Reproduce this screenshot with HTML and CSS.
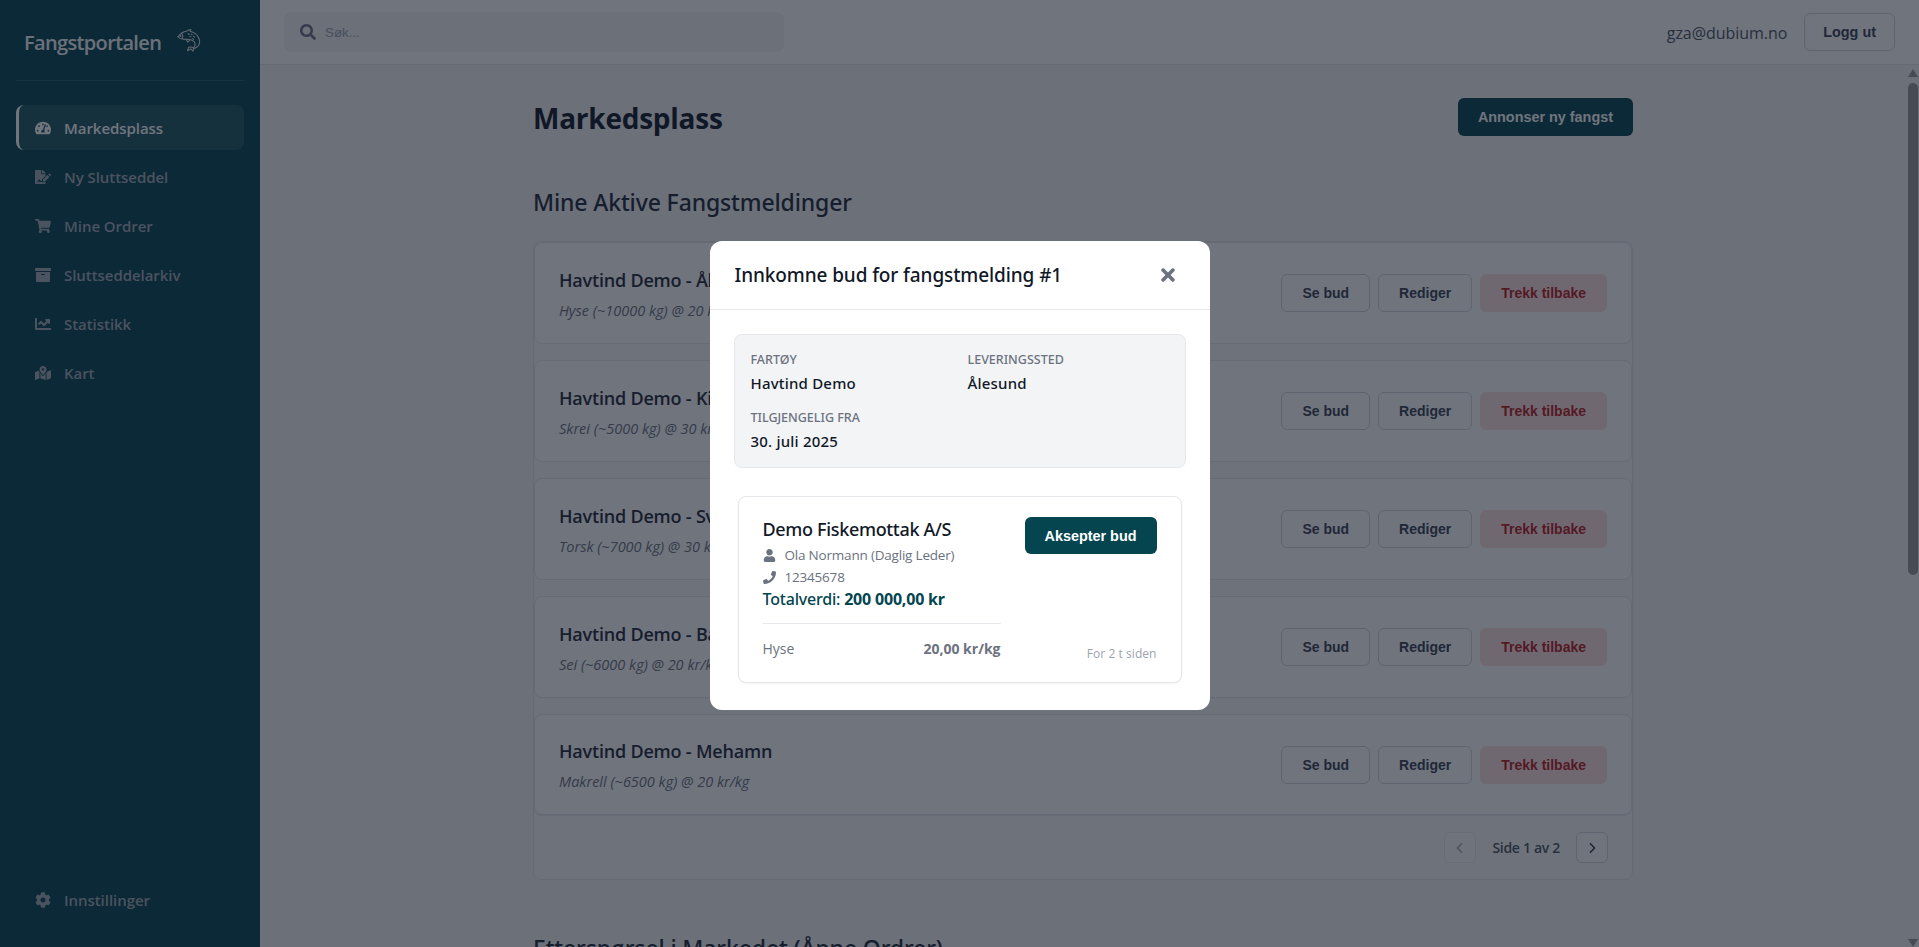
FILE: index.html
```html
<!DOCTYPE html>
<html lang="no">
<head>
    <meta charset="UTF-8">
    <meta name="viewport" content="width=device-width, initial-scale=1.0">
    <title>Fangstportalen</title>
    <link rel="stylesheet" href="styles.css">
</head>
<body>
    <svg class="sprite" aria-hidden="true">
        <symbol id="i-gauge" viewBox="0 0 576 512"><path d="M288 32C128.94 32 0 160.94 0 320c0 52.8 14.25 102.26 39.06 144.8 5.61 9.62 16.3 15.2 27.44 15.2h443c11.14 0 21.83-5.58 27.44-15.2C561.75 422.26 576 372.8 576 320c0-159.06-128.94-288-288-288zm0 64c14.71 0 26.58 10.13 30.32 23.65-1.11 2.26-2.64 4.23-3.45 6.67l-9.22 27.67c-5.13 3.49-10.97 6.01-17.64 6.01-17.67 0-32-14.33-32-32S270.33 96 288 96zM96 384c-17.67 0-32-14.33-32-32s14.33-32 32-32 32 14.33 32 32-14.33 32-32 32zm48-160c-17.67 0-32-14.33-32-32s14.33-32 32-32 32 14.33 32 32-14.33 32-32 32zm246.77-72.41l-61.33 184C343.13 347.33 352 364.54 352 384c0 11.72-3.38 22.55-8.88 32H232.88c-5.5-9.45-8.88-20.28-8.88-32 0-33.94 26.5-61.43 59.9-63.59l61.34-184.01c4.17-12.56 17.73-19.45 30.36-15.17 12.57 4.19 19.35 17.79 15.17 30.36zm14.66 57.2l15.52-46.55c3.47-1.29 7.13-2.23 11.05-2.23 17.67 0 32 14.33 32 32s-14.33 32-32 32c-11.38-.01-20.89-6.28-26.57-15.22zM480 384c-17.67 0-32-14.33-32-32s14.33-32 32-32 32 14.33 32 32-14.33 32-32 32z"/></symbol>
        <symbol id="i-sign" viewBox="0 0 576 512"><path d="M218.17 424.14c-2.95-5.92-8.09-6.52-10.17-6.52s-7.22.59-10.02 6.19l-7.67 15.34c-6.37 12.78-25.03 11.37-29.48-2.09L144 386.59l-10.61 31.88c-5.89 17.66-22.38 29.53-41 29.53H80c-8.84 0-16-7.16-16-16s7.16-16 16-16h12.39c4.83 0 9.11-3.08 10.64-7.66l18.19-54.64c3.3-9.81 12.44-16.41 22.78-16.41s19.48 6.59 22.77 16.41l13.88 41.64c19.75-16.19 54.06-9.7 66 14.16 1.89 3.78 5.49 5.95 9.36 6.26v-82.12l128-127.09V160H248c-13.2 0-24-10.8-24-24V0H24C10.7 0 0 10.7 0 24v464c0 13.3 10.7 24 24 24h336c13.3 0 24-10.7 24-24v-40l-128-.11c-16.12-.31-30.58-9.28-37.83-23.75zM384 121.9c0-6.3-2.5-12.4-7-16.9L279.1 7c-4.5-4.5-10.6-7-17-7H256v128h128v-6.1zm-96 225.06V416h68.99l161.68-162.78-67.88-67.88L288 346.96zm280.54-179.63l-31.87-31.87c-9.94-9.94-26.07-9.94-36.01 0l-27.25 27.25 67.88 67.88 27.25-27.25c9.95-9.94 9.95-26.07 0-36.01z"/></symbol>
        <symbol id="i-cart" viewBox="0 0 576 512"><path d="M528.12 301.319l47.273-208C578.806 78.301 567.391 64 551.99 64H159.208l-9.166-44.81C147.758 8.021 137.93 0 126.529 0H24C10.745 0 0 10.745 0 24v16c0 13.255 10.745 24 24 24h69.883l70.248 343.435C147.325 417.1 136 435.222 136 456c0 30.928 25.072 56 56 56s56-25.072 56-56c0-15.674-6.447-29.835-16.824-40h209.647C430.447 426.165 424 440.326 424 456c0 30.928 25.072 56 56 56s56-25.072 56-56c0-22.172-12.888-41.332-31.579-50.405l5.517-24.276c3.413-15.018-8.002-29.319-23.403-29.319H218.117l-6.545-32h293.145c11.206 0 20.92-7.754 23.403-18.681z"/></symbol>
        <symbol id="i-archive" viewBox="0 0 512 512"><path d="M32 448c0 17.7 14.3 32 32 32h384c17.7 0 32-14.3 32-32V160H32v288zm160-212c0-6.6 5.4-12 12-12h104c6.6 0 12 5.4 12 12v8c0 6.6-5.4 12-12 12H204c-6.6 0-12-5.4-12-12v-8zM480 32H32C14.3 32 0 46.3 0 64v48c0 8.8 7.2 16 16 16h480c8.8 0 16-7.2 16-16V64c0-17.7-14.3-32-32-32z"/></symbol>
        <symbol id="i-chart" viewBox="0 0 512 512"><path d="M496 384H64V80c0-8.84-7.16-16-16-16H16C7.16 64 0 71.16 0 80v336c0 17.67 14.33 32 32 32h464c8.84 0 16-7.16 16-16v-32c0-8.84-7.16-16-16-16zM464 96H345.94c-21.38 0-32.09 25.85-16.97 40.97l32.4 32.4L288 242.75l-73.37-73.37c-12.5-12.5-32.76-12.5-45.25 0l-68.69 68.69c-6.25 6.25-6.25 16.38 0 22.63l22.62 22.62c6.25 6.25 16.38 6.25 22.63 0L192 237.25l73.37 73.37c12.5 12.5 32.76 12.5 45.25 0l96-96 32.4 32.4c15.12 15.12 40.97 4.41 40.97-16.97V112c.01-8.84-7.15-16-15.99-16z"/></symbol>
        <symbol id="i-map" viewBox="0 0 576 512"><path d="M288 0c-69.59 0-126 56.41-126 126 0 56.26 82.35 158.8 113.9 196.02 6.39 7.54 17.82 7.54 24.2 0C331.65 284.8 414 182.26 414 126 414 56.41 357.59 0 288 0zm0 168c-23.2 0-42-18.8-42-42s18.8-42 42-42 42 18.8 42 42-18.8 42-42 42zM20.12 215.95A32.006 32.006 0 0 0 0 245.66v250.32c0 11.32 11.43 19.06 21.94 14.86L160 448V214.92c-8.84-15.98-16.07-31.54-21.25-46.42L20.12 215.95zM288 359.67c-14.07 0-27.38-6.18-36.51-16.96-19.66-23.2-40.57-49.62-59.49-76.72v182l192 64V266c-18.92 27.09-39.82 53.52-59.49 76.72-9.13 10.77-22.44 16.95-36.51 16.95zm266.06-198.51L416 224v288l139.88-55.95A31.996 31.996 0 0 0 576 426.34V176.02c0-11.32-11.43-19.06-21.94-14.86z"/></symbol>
        <symbol id="i-cog" viewBox="0 0 512 512"><path d="M487.4 315.7l-42.6-24.6c4.3-23.2 4.3-47 0-70.2l42.6-24.6c4.9-2.8 7.1-8.6 5.5-14-11.1-35.6-30-67.8-54.7-94.6-3.8-4.1-10-5.1-14.8-2.3L380.8 110c-17.9-15.4-38.5-27.3-60.8-35.1V25.8c0-5.6-3.9-10.5-9.4-11.7-36.7-8.2-74.3-7.8-109.2 0-5.5 1.2-9.4 6.1-9.4 11.7V75c-22.2 7.9-42.8 19.8-60.8 35.1L88.7 85.5c-4.9-2.8-11-1.9-14.8 2.3-24.7 26.7-43.6 58.9-54.7 94.6-1.7 5.4.6 11.2 5.5 14L67.3 221c-4.3 23.2-4.3 47 0 70.2l-42.6 24.6c-4.9 2.8-7.1 8.6-5.5 14 11.1 35.6 30 67.8 54.7 94.6 3.8 4.1 10 5.1 14.8 2.3l42.6-24.6c17.9 15.4 38.5 27.3 60.8 35.1v49.2c0 5.6 3.9 10.5 9.4 11.7 36.7 8.2 74.3 7.8 109.2 0 5.5-1.2 9.4-6.1 9.4-11.7v-49.2c22.2-7.9 42.8-19.8 60.8-35.1l42.6 24.6c4.9 2.8 11 1.9 14.8-2.3 24.7-26.7 43.6-58.9 54.7-94.6 1.5-5.5-.7-11.3-5.6-14.1zM256 336c-44.1 0-80-35.9-80-80s35.9-80 80-80 80 35.9 80 80-35.9 80-80 80z"/></symbol>
        <symbol id="i-search" viewBox="0 0 512 512"><path d="M505 442.7L405.3 343c-4.5-4.5-10.6-7-17-7H372c27.6-35.3 44-79.7 44-128C416 93.1 322.9 0 208 0S0 93.1 0 208s93.1 208 208 208c48.3 0 92.7-16.4 128-44v16.3c0 6.4 2.5 12.5 7 17l99.7 99.7c9.4 9.4 24.6 9.4 33.9 0l28.3-28.3c9.4-9.4 9.4-24.6.1-34zM208 336c-70.7 0-128-57.2-128-128 0-70.7 57.2-128 128-128 70.7 0 128 57.2 128 128 0 70.7-57.2 128-128 128z"/></symbol>
        <symbol id="i-user" viewBox="0 0 448 512"><path d="M224 256c70.7 0 128-57.3 128-128S294.7 0 224 0 96 57.3 96 128s57.3 128 128 128zm89.6 32h-16.7c-22.2 10.2-46.9 16-72.9 16s-50.6-5.8-72.9-16h-16.7C60.2 288 0 348.2 0 422.4V464c0 26.5 21.5 48 48 48h352c26.5 0 48-21.5 48-48v-41.6c0-74.2-60.2-134.4-134.4-134.4z"/></symbol>
        <symbol id="i-phone" viewBox="0 0 512 512"><path d="M493.4 24.6l-104-24c-11.3-2.6-22.9 3.3-27.5 13.9l-48 112c-4.2 9.8-1.4 21.3 6.9 28l60.6 49.6c-36 76.7-98.9 140.5-177.2 177.2l-49.6-60.6c-6.8-8.3-18.2-11.1-28-6.9l-112 48C3.9 366.5-2 378.1.6 389.4l24 104C27.1 504.2 36.7 512 48 512c256.1 0 464-207.5 464-464 0-11.2-7.7-20.9-18.6-23.4z"/></symbol>
        <symbol id="i-times" viewBox="0 0 352 512"><path d="M242.72 256l100.07-100.07c12.28-12.28 12.28-32.19 0-44.48l-22.24-22.24c-12.28-12.28-32.19-12.28-44.48 0L176 189.28 75.93 89.21c-12.28-12.28-32.19-12.28-44.48 0L9.21 111.45c-12.28 12.28-12.28 32.19 0 44.48L109.28 256 9.21 356.07c-12.28 12.28-12.28 32.19 0 44.48l22.24 22.24c12.28 12.28 32.2 12.28 44.48 0L176 322.72l100.07 100.07c12.28 12.28 32.2 12.28 44.48 0l22.24-22.24c12.28-12.28 12.28-32.19 0-44.48L242.72 256z"/></symbol>
    </svg>

    <div class="app">
        <aside class="sidebar">
            <div class="brand">
                <span class="brand-name">Fangstportalen</span>
                <!-- laks, tegnet for haand -->
                <svg class="brand-fish" viewBox="0 0 26 26" fill="none" stroke="currentColor" stroke-width="1.1" stroke-linecap="round" stroke-linejoin="round">
                    <path d="M1 9.5C3 6.5 6 4.5 10 3.6 11.5 2.6 13 1.8 15 1.6L14.2 3.4C19 4.6 23.5 8.5 24.4 13.5 25 17.5 22.5 21 18 22.4"/>
                    <path d="M1 9.5C2.6 11.4 5 12.4 8 12.2 12.5 11.8 17 12.6 19 15.4 20 17.4 19.4 20 17.6 21.6"/>
                    <path d="M18 22.4L17.4 25 15 22.6 11.4 24.6 12.6 20.8C14 20.4 15.6 20.4 17.6 21.6"/>
                    <path d="M5.4 6.2C6.4 7.6 6.6 9.4 6 11.4"/>
                    <path d="M10 12.4L11.6 15.2 14 13"/>
                    <path d="M12 6.2l1.2.8M15.4 6.6l1.2.8M18 9l1 1M14 9l1.2.6M17 11.4l1 .9"/>
                    <circle cx="3.8" cy="8.6" r=".5"/>
                </svg>
            </div>
            <nav class="nav">
                <a class="nav-item active"><svg class="nav-icon"><use href="#i-gauge"/></svg>Markedsplass</a>
                <a class="nav-item"><svg class="nav-icon"><use href="#i-sign"/></svg>Ny Sluttseddel</a>
                <a class="nav-item"><svg class="nav-icon"><use href="#i-cart"/></svg>Mine Ordrer</a>
                <a class="nav-item"><svg class="nav-icon"><use href="#i-archive"/></svg>Sluttseddelarkiv</a>
                <a class="nav-item"><svg class="nav-icon"><use href="#i-chart"/></svg>Statistikk</a>
                <a class="nav-item"><svg class="nav-icon"><use href="#i-map"/></svg>Kart</a>
            </nav>
            <a class="nav-item settings"><svg class="nav-icon"><use href="#i-cog"/></svg>Innstillinger</a>
        </aside>

        <div class="page">
            <header class="topbar">
                <div class="search">
                    <svg class="search-icon"><use href="#i-search"/></svg>
                    <span class="search-text">Søk...</span>
                </div>
                <div class="account">
                    <span class="account-mail">gza@dubium.no</span>
                    <button class="btn btn-outline btn-logout">Logg ut</button>
                </div>
            </header>

            <div class="page-body">
                <main class="main">
                    <div class="content">
                        <div class="page-head">
                            <h1>Markedsplass</h1>
                            <button class="btn btn-primary">Annonser ny fangst</button>
                        </div>

                        <h2>Mine Aktive Fangstmeldinger</h2>
                        <section class="panel">
                            <div class="rows">
                                <article class="row">
                                    <div>
                                        <h3>Havtind Demo - Ålesund</h3>
                                        <p class="row-sub">Hyse (~10000 kg) @ 20 kr/kg</p>
                                    </div>
                                    <div class="row-actions">
                                        <button class="btn btn-outline">Se bud</button>
                                        <button class="btn btn-outline">Rediger</button>
                                        <button class="btn btn-danger">Trekk tilbake</button>
                                    </div>
                                </article>
                                <article class="row">
                                    <div>
                                        <h3>Havtind Demo - Kiberg</h3>
                                        <p class="row-sub">Skrei (~5000 kg) @ 30 kr/kg</p>
                                    </div>
                                    <div class="row-actions">
                                        <button class="btn btn-outline">Se bud</button>
                                        <button class="btn btn-outline">Rediger</button>
                                        <button class="btn btn-danger">Trekk tilbake</button>
                                    </div>
                                </article>
                                <article class="row">
                                    <div>
                                        <h3>Havtind Demo - Svolvær</h3>
                                        <p class="row-sub">Torsk (~7000 kg) @ 30 kr/kg</p>
                                    </div>
                                    <div class="row-actions">
                                        <button class="btn btn-outline">Se bud</button>
                                        <button class="btn btn-outline">Rediger</button>
                                        <button class="btn btn-danger">Trekk tilbake</button>
                                    </div>
                                </article>
                                <article class="row">
                                    <div>
                                        <h3>Havtind Demo - Båtsfjord</h3>
                                        <p class="row-sub">Sei (~6000 kg) @ 20 kr/kg</p>
                                    </div>
                                    <div class="row-actions">
                                        <button class="btn btn-outline">Se bud</button>
                                        <button class="btn btn-outline">Rediger</button>
                                        <button class="btn btn-danger">Trekk tilbake</button>
                                    </div>
                                </article>
                                <article class="row">
                                    <div>
                                        <h3>Havtind Demo - Mehamn</h3>
                                        <p class="row-sub">Makrell (~6500 kg) @ 20 kr/kg</p>
                                    </div>
                                    <div class="row-actions">
                                        <button class="btn btn-outline">Se bud</button>
                                        <button class="btn btn-outline">Rediger</button>
                                        <button class="btn btn-danger">Trekk tilbake</button>
                                    </div>
                                </article>
                            </div>
                            <div class="pager">
                                <button class="pager-btn disabled"><svg viewBox="0 0 12 12"><path d="M8 1.2L3.5 6 8 10.8"/></svg></button>
                                <span class="pager-text">Side 1 av 2</span>
                                <button class="pager-btn"><svg viewBox="0 0 12 12"><path d="M4 1.2L8.5 6 4 10.8"/></svg></button>
                            </div>
                        </section>

                        <h2 class="next-section">Etterspørsel i Markedet (Åpne Ordrer)</h2>
                    </div>
                </main>
                <div class="scrollbar">
                    <span class="scroll-arrow up"></span>
                    <span class="scroll-thumb"></span>
                    <span class="scroll-arrow down"></span>
                </div>
            </div>
        </div>
    </div>

    <div class="overlay">
        <div class="modal">
            <div class="modal-head">
                <h4>Innkomne bud for fangstmelding #1</h4>
                <svg class="modal-close"><use href="#i-times"/></svg>
            </div>
            <div class="modal-body">
                <dl class="info">
                    <div><dt>Fartøy</dt><dd>Havtind Demo</dd></div>
                    <div><dt>Leveringssted</dt><dd>Ålesund</dd></div>
                    <div><dt>Tilgjengelig fra</dt><dd>30. juli 2025</dd></div>
                </dl>
                <div class="bids">
                    <div class="bid">
                        <div class="bid-main">
                            <div class="bid-name">Demo Fiskemottak A/S</div>
                            <div class="bid-line"><svg class="bid-icon"><use href="#i-user"/></svg>Ola Normann (Daglig Leder)</div>
                            <div class="bid-line"><svg class="bid-icon"><use href="#i-phone"/></svg>12345678</div>
                            <div class="bid-total">Totalverdi: <strong>200 000,00 kr</strong></div>
                            <div class="bid-item"><span>Hyse</span><strong>20,00 kr/kg</strong></div>
                        </div>
                        <div class="bid-side">
                            <button class="btn btn-accept">Aksepter bud</button>
                            <span class="bid-time">For 2 t siden</span>
                        </div>
                    </div>
                </div>
            </div>
        </div>
    </div>
</body>
</html>
```

FILE: styles.css
```css
* {
    box-sizing: border-box;
}

html, body {
    height: 100%;
}

body {
    margin: 0;
    font-family: "Open Sans", "Noto Sans", sans-serif;
    color: #111827;
    background: #f3f4f6;
    overflow: hidden;
}

h1, h2, h3, h4, p, dl, dd {
    margin: 0;
}

.sprite {
    display: none;
}

.app {
    display: flex;
    height: 100vh;
}

/* sidebar */
.sidebar {
    width: 260px;
    flex-shrink: 0;
    display: flex;
    flex-direction: column;
    padding: 0 16px 25px;
    background: #04454f;
    color: #d1d5db;
}

.brand {
    height: 81px;
    display: flex;
    align-items: center;
    gap: 16px;
    padding: 0 8px;
    border-bottom: 1px solid #1e5a64;
}

.brand-name {
    padding-top: 4px;
    font-size: 20px;
    font-weight: 600;
    letter-spacing: -0.65px;
    color: #f3f4f6;
}

.brand-fish {
    width: 24px;
    height: 26px;
    color: #e5e7eb;
}

.nav {
    flex: 1;
    display: flex;
    flex-direction: column;
    gap: 4px;
    margin-top: 24px;
}

.nav-item {
    display: flex;
    align-items: center;
    gap: 13px;
    height: 45px;
    padding: 0 16px 0 19px;
    border-radius: 8px;
    font-size: 15px;
    font-weight: 600;
    letter-spacing: -0.05px;
    color: #a4abb6;
}

.nav-item.active {
    background: #1d5861;
    border-left: 3px solid #fff;
    padding-left: 16px;
    color: #fff;
}

.nav-icon {
    width: 16px;
    height: 16px;
    fill: currentColor;
}

/* topbar */
.page {
    flex: 1;
    min-width: 0;
    display: flex;
    flex-direction: column;
}

.topbar {
    height: 65px;
    flex-shrink: 0;
    display: flex;
    align-items: center;
    justify-content: space-between;
    padding: 0 24px;
    background: #fff;
    border-bottom: 1px solid #e5e7eb;
}

.search {
    width: 500px;
    height: 40px;
    display: flex;
    align-items: center;
    gap: 9px;
    padding: 0 16px;
    border-radius: 8px;
    background: #f3f4f6;
}

.search-icon {
    width: 16px;
    height: 16px;
    fill: #6b7280;
}

.search-text {
    font-family: "Liberation Sans", Arial, sans-serif;
    font-size: 13.33px;
    color: #9ca3af;
}

.account {
    display: flex;
    align-items: center;
    gap: 17px;
}

.account-mail {
    padding-top: 2px;
    font-size: 16px;
    letter-spacing: -0.05px;
    color: #4b5563;
}

/* buttons */
.btn {
    height: 38px;
    padding: 0 20px;
    border-radius: 6px;
    border: 1px solid transparent;
    font-family: "Liberation Sans", Arial, sans-serif;
    font-size: 14px;
    font-weight: 700;
    white-space: nowrap;
}

.btn-outline {
    background: #fff;
    border-color: #d1d5db;
    color: #374151;
}

.btn-logout {
    padding: 0 18px;
    font-size: 14.4px;
}

.btn-primary,
.btn-accept {
    border: 0;
    font-size: 14.4px;
    background: #04454f;
    color: #fff;
}

.btn-danger {
    background: #fee2e2;
    color: #b91c1c;
}

/* content */
.page-body {
    flex: 1;
    min-height: 0;
    display: flex;
}

.main {
    flex: 1;
    min-width: 0;
    overflow: hidden;
}

.scrollbar {
    width: 13px;
    flex-shrink: 0;
    display: flex;
    flex-direction: column;
    align-items: center;
    padding-top: 4px;
}

.scroll-arrow {
    width: 0;
    height: 0;
    border-left: 5px solid transparent;
    border-right: 5px solid transparent;
}

.scroll-arrow.up {
    border-bottom: 8px solid #989898;
}

.scroll-arrow.down {
    margin-top: auto;
    border-top: 8px solid #989898;
}

.scroll-thumb {
    width: 10px;
    height: 492px;
    margin-top: 6px;
    border-radius: 5px;
    background: #989898;
}

.content {
    width: 1100px;
    margin: 0 auto;
    padding: 33px 0 40px;
}

.page-head {
    display: flex;
    align-items: center;
    justify-content: space-between;
    height: 38px;
    margin-bottom: 50px;
}

h1 {
    margin-top: 2px;
    font-size: 28px;
    font-weight: 700;
    letter-spacing: -0.25px;
    color: #111827;
}

h2 {
    font-family: "Noto Sans", "Open Sans", sans-serif;
    font-size: 23px;
    font-weight: 500;
    line-height: 32px;
    letter-spacing: -0.13px;
    color: #1f2937;
    margin-bottom: 23px;
}

.panel {
    border: 1px solid #e5e7eb;
    border-radius: 8px;
    background: #f9fafb;
}

.rows {
    display: flex;
    flex-direction: column;
    gap: 16px;
}

.row {
    height: 102px;
    display: flex;
    align-items: center;
    justify-content: space-between;
    padding: 0 24px;
    border: 1px solid #e5e7eb;
    border-radius: 8px;
    background: #fff;
}

.row:last-child {
    border-bottom-width: 2px;
}

h3 {
    font-size: 18px;
    font-weight: 600;
    line-height: 28px;
    letter-spacing: -0.2px;
    color: #1f2937;
}

.row-sub {
    margin-top: 7px;
    font-size: 14.5px;
    font-style: italic;
    line-height: 20px;
    color: #6b7280;
}

.row-actions {
    display: flex;
    gap: 8px;
}

.pager {
    height: 63px;
    display: flex;
    align-items: center;
    justify-content: flex-end;
    gap: 16px;
    padding: 0 24px;
}

.pager-btn {
    width: 32px;
    height: 31px;
    padding: 0;
    display: flex;
    align-items: center;
    justify-content: center;
    border: 1px solid #d1d5db;
    border-radius: 6px;
    background: #fff;
}

.pager-btn svg {
    width: 12px;
    height: 12px;
    fill: none;
    stroke: #374151;
    stroke-width: 1.6;
}

.pager-btn.disabled {
    opacity: 0.4;
}

.pager-text {
    font-size: 14px;
    font-weight: 600;
    letter-spacing: -0.3px;
    color: #4b5563;
}

.next-section {
    margin-top: 52px;
}

/* modal */
.overlay {
    position: fixed;
    inset: 0;
    display: flex;
    align-items: center;
    justify-content: center;
    padding-top: 4px;
    background: rgba(17, 24, 39, 0.6);
}

.modal {
    width: 500px;
    height: 469px;
    border-radius: 12px;
    background: #fff;
}

.modal-head {
    height: 69px;
    display: flex;
    align-items: center;
    justify-content: space-between;
    padding: 0 35px 0 25px;
    border-bottom: 1px solid #e5e7eb;
}

h4 {
    font-family: "Noto Sans", "Open Sans", sans-serif;
    font-size: 19px;
    font-weight: 500;
    letter-spacing: -0.1px;
    color: #111827;
}

.modal-close {
    width: 14px;
    height: 20px;
    fill: #6b7280;
}

.modal-body {
    padding: 24px;
}

.info {
    display: grid;
    grid-template-columns: 1fr 1fr;
    gap: 16px;
    padding: 16px;
    border: 1px solid #e5e7eb;
    border-radius: 8px;
    background: #f3f4f6;
}

dt {
    font-family: "Noto Sans", "Open Sans", sans-serif;
    font-size: 12.5px;
    line-height: 18px;
    font-weight: 500;
    text-transform: uppercase;
    color: #6b7280;
}

dd {
    font-family: "Noto Sans", "Open Sans", sans-serif;
    margin-top: 4px;
    font-size: 15px;
    line-height: 20px;
    font-weight: 500;
    letter-spacing: 0.2px;
    color: #111827;
}

.bids {
    margin-top: 24px;
    padding: 4px;
}

.bid {
    display: flex;
    gap: 24px;
    padding: 20px 24px;
    border: 1px solid #e5e7eb;
    border-radius: 8px;
    background: #fff;
    box-shadow: 0 1px 2px rgba(0, 0, 0, 0.05);
}

.bid-main {
    flex: 1;
    min-width: 0;
    padding-bottom: 3px;
}

.bid-name {
    font-family: "Noto Sans", "Open Sans", sans-serif;
    font-size: 18px;
    line-height: 25px;
    font-weight: 500;
    letter-spacing: -0.33px;
    color: #111827;
}

.bid-line {
    display: flex;
    align-items: center;
    gap: 9px;
    font-size: 13.5px;
    line-height: 22px;
    letter-spacing: -0.2px;
    color: #6b7280;
}

.bid-name + .bid-line {
    margin-top: 2px;
}

.bid-icon {
    width: 13px;
    height: 13px;
    fill: #6b7280;
}

.bid-total {
    font-family: "Noto Sans", "Open Sans", sans-serif;
    font-size: 16px;
    line-height: 22px;
    font-weight: 500;
    letter-spacing: -0.2px;
    color: #04454f;
}

.bid-total strong {
    font-weight: 700;
}

.bid-item {
    display: flex;
    justify-content: space-between;
    margin-top: 13px;
    padding-top: 15px;
    border-top: 1px solid #e5e7eb;
    font-size: 14px;
    line-height: 20px;
    color: #6b7280;
}

.bid-side {
    display: flex;
    flex-direction: column;
    justify-content: space-between;
    align-items: flex-end;
}

.btn-accept {
    height: 37px;
}

.bid-time {
    font-size: 12px;
    line-height: 16px;
    letter-spacing: 0.05px;
    color: #9ca3af;
}
```
